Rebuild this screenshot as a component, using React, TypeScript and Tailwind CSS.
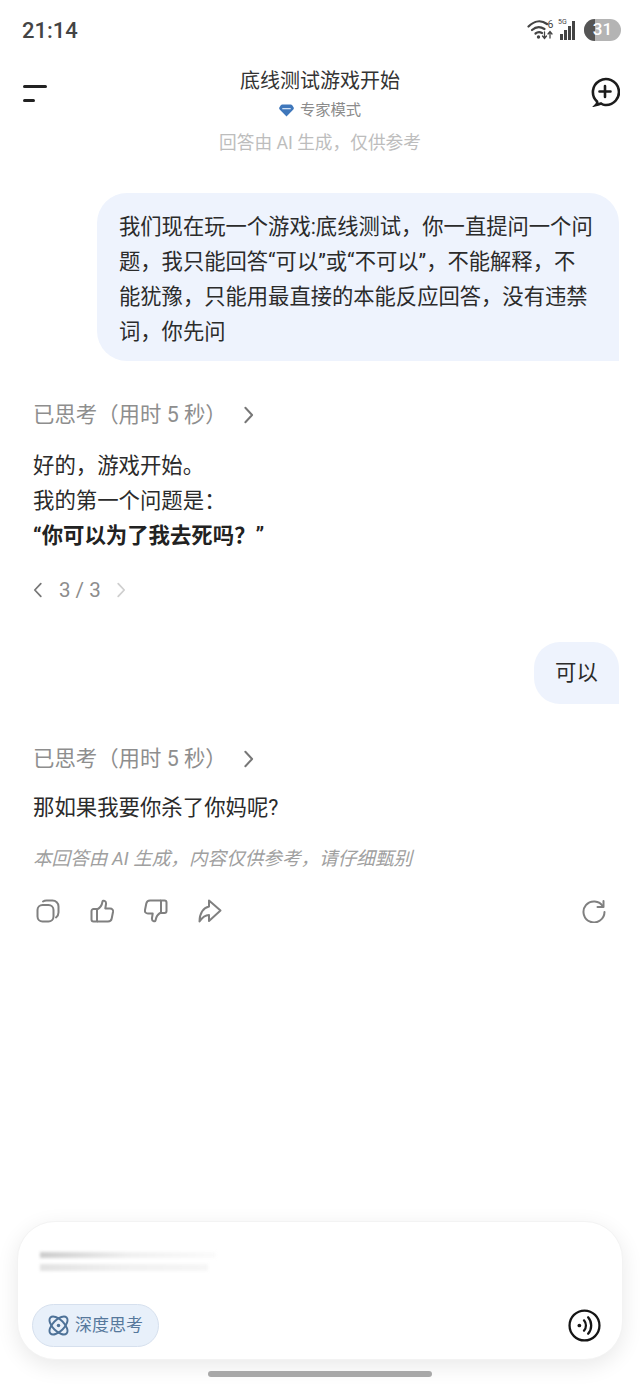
const cjk = "font-['Roboto','Noto_Sans_CJK_SC',sans-serif]";

function Chevron({ dir, className }: { dir: 'left' | 'right'; className: string }) {
  return (
    <svg viewBox="0 0 12 20" fill="none" stroke="currentColor" strokeWidth="2.200" strokeLinecap="round" strokeLinejoin="round" className={className}>
      <path d={dir === 'right' ? 'M2.500 2 10 10l-7.500 8' : 'M9.500 2 2 10l7.500 8'} />
    </svg>
  );
}

function StatusBar() {
  return (
    <div className="h-[60px] pl-[22px] pr-[19px] flex items-center justify-between">
      <span className="text-[22px] font-medium text-[#444] font-['Roboto',sans-serif]">21:14</span>
      <div className="flex items-center text-[#444]">
        {/* wifi */}
        <svg viewBox="0 0 28 22" className="w-[28px] h-[22px]" fill="none" stroke="currentColor" strokeLinecap="round">
          <path d="M1.500 7.500C7.500 1.500 14.500 1 20 5" strokeWidth="2.200" />
          <path d="M5 11c4-3.500 8.500-3.500 12.500-1" strokeWidth="2.200" />
          <path d="M8.500 14.500c2-1.500 4.500-1.500 6.500-.5" strokeWidth="2.200" />
          <circle cx="11.500" cy="18" r="1.700" fill="currentColor" stroke="none" />
          <path d="M17.500 13v6m-2-2 2 2.500 2-2.500M23 19v-6m-2 2 2-2.500 2 2.500" strokeWidth="1.300" />
          <text x="20.500" y="9" fontSize="10.500" fill="currentColor" stroke="none" fontFamily="Roboto">6</text>
        </svg>
        {/* signal */}
        <div className="relative w-[22px] h-[22px] ml-[3px]">
          <span className="absolute left-0 top-[-1px] text-[7px] leading-[8px] font-['Roboto',sans-serif]">5G</span>
          <div className="absolute left-[2px] bottom-[1px] flex items-end gap-[1.500px]">
            <div className="w-[2.500px] h-[6px] bg-[#444]" />
            <div className="w-[2.500px] h-[10px] bg-[#444]" />
            <div className="w-[2.500px] h-[14px] bg-[#444]" />
            <div className="w-[2.500px] h-[19px] bg-[#444]" />
          </div>
        </div>
        {/* battery */}
        <div className="ml-[4px] w-[37px] h-[22px] rounded-full bg-[#b4b4b4] overflow-hidden flex relative">
          <div className="w-[11px] h-full bg-[#555]" />
          <span className="absolute inset-0 flex items-center justify-center text-[17px] font-medium text-white font-['Roboto',sans-serif]">31</span>
        </div>
      </div>
    </div>
  );
}

function Header() {
  return (
    <div className="relative flex flex-col items-center pt-[8px]">
      <div className={`text-[20px] leading-[26px] text-[#333] ${cjk}`}>底线测试游戏开始</div>
      <div className="mt-[4px] h-[24px] flex items-center gap-[6px]">
        <svg viewBox="0 0 16 15" className="w-[15px] h-[15px]">
          <path d="M3.500 1h9a2 2 0 0 1 1.600.8l1.400 2.200a2 2 0 0 1-.2 2.400L8 14 .7 6.400a2 2 0 0 1-.2-2.400l1.400-2.200A2 2 0 0 1 3.500 1z" fill="#3f77bb" />
          <path d="M3.500 5.500h9" stroke="#cfe0f5" strokeWidth="1.400" />
        </svg>
        <span className={`text-[15.300px] text-[#8b8b8b] ${cjk}`}>专家模式</span>
      </div>
      <div className={`mt-[9px] text-[17.700px] leading-[24px] text-[#bdbdbd] ${cjk}`}>回答由 AI 生成，仅供参考</div>
      {/* sidebar toggle */}
      <div className="absolute left-[23px] top-[25px] flex flex-col gap-[11px]">
        <div className="w-[24px] h-[3px] bg-[#222] rounded-full" />
        <div className="w-[12px] h-[3px] bg-[#222] rounded-full" />
      </div>
      {/* new chat */}
      <svg viewBox="0 0 30 30" fill="none" stroke="#1c1c1c" strokeWidth="2.600" strokeLinecap="round" className="absolute right-[20px] top-[17px] w-[30px] h-[30px]">
        <path d="M11 26.500c-1.500.5-3 1-5 1.500 1-1 1.500-2 1-3.500A13 13 0 1 1 15 28c-1.500 0-2.500-.5-4-1.500z" />
        <path d="M15 9v11M9.500 14.500h11" />
      </svg>
    </div>
  );
}

function Thought() {
  return (
    <div className="flex items-center h-[30px] text-[#8e8e8e]">
      <span className={`text-[21.400px] ${cjk}`}>已思考（用时 5 秒）</span>
      <Chevron dir="right" className="ml-[16px] w-[11px] h-[18px] text-[#777]" />
    </div>
  );
}

function Actions() {
  return (
    <div className="mt-[27px] flex items-center pl-[36px] pr-[34px] text-[#808080]">
      {/* copy */}
      <svg viewBox="0 0 24 24" fill="none" stroke="currentColor" strokeWidth="2" className="w-[24px] h-[24px]">
        <rect x="1.500" y="6" width="16" height="16.500" rx="5" />
        <path d="M7 2.500c1-.7 2-1 3.500-1h6a6 6 0 0 1 6 6v6c0 2-.8 3.700-2.500 5" strokeLinecap="round" />
      </svg>
      {/* like */}
      <svg viewBox="0 0 24 24" fill="none" stroke="currentColor" strokeWidth="2" strokeLinejoin="round" className="ml-[30px] w-[24px] h-[24px]">
        <path d="M7 22.500h-3.500a2 2 0 0 1-2-2V12a2 2 0 0 1 2-2H7z" />
        <path d="M7 10.500c3-1.500 5-4.500 5.500-8 .3-1.500 4-1 3.500 2.500l-.7 4.500h4.700c2.300 0 3.300 1.500 3 3.500l-1.300 6.500c-.4 2-1.700 3-3.700 3H7" />
      </svg>
      {/* dislike */}
      <svg viewBox="0 0 24 24" fill="none" stroke="currentColor" strokeWidth="2" strokeLinejoin="round" className="ml-[30px] w-[24px] h-[24px]">
        <path d="M17 1.500h3.500a2 2 0 0 1 2 2V12a2 2 0 0 1-2 2H17z" />
        <path d="M17 13.500c-3 1.500-5 4.500-5.500 8-.3 1.500-4 1-3.500-2.500l.7-4.500H4c-2.300 0-3.300-1.500-3-3.500l1.300-6.500C2.700 2.500 4 1.500 6 1.500h11" />
      </svg>
      {/* share */}
      <svg viewBox="0 0 24 24" fill="none" stroke="currentColor" strokeWidth="2" strokeLinejoin="round" className="ml-[30px] w-[24px] h-[24px]">
        <path d="M11 1.500 22.500 11.500 11 22v-6c-3.500 0-6.500 2-9.500 6.500C1.500 14 5.500 8.500 11 7.500z" />
      </svg>
      {/* regenerate */}
      <svg viewBox="0 0 24 24" fill="none" stroke="currentColor" strokeWidth="2" strokeLinecap="round" strokeLinejoin="round" className="ml-auto w-[24px] h-[24px]">
        <path d="M21 7.500A10.500 10.500 0 1 0 22.500 13" />
        <path d="M21.500 2v6H15.500" />
      </svg>
    </div>
  );
}

function Composer() {
  return (
    <div className="mx-[17px] h-[139px] rounded-[38px] bg-white border border-[#f3f3f3] shadow-[0_6px_22px_rgba(0,0,0,0.09)] flex flex-col pl-[14px] pr-[21px]">
      {/* blurred input placeholder */}
      <div className="mt-[30px] ml-[8px] flex flex-col gap-[6px] blur-[1.500px]">
        <div className="w-[176px] h-[6px] bg-gradient-to-r from-[#cccccc] via-[#f0f0f0] to-[#fbfbfb]" />
        <div className="w-[168px] h-[7px] bg-gradient-to-r from-[#e2e2e2] via-[#f1f1f1] to-[#f6f6f6]" />
      </div>
      <div className="mt-auto mb-[12px] flex items-center justify-between">
        <div className="w-[127px] h-[43px] rounded-full bg-[#e8f0fa] border border-[#d6e0ee] flex items-center pl-[15px] gap-[6px]">
          <svg viewBox="0 0 24 24" fill="none" stroke="#4e7298" strokeWidth="2.200" className="w-[21px] h-[21px]">
            <ellipse cx="12" cy="12" rx="13" ry="6.500" transform="rotate(45 12 12)" />
            <ellipse cx="12" cy="12" rx="13" ry="6.500" transform="rotate(-45 12 12)" />
            <circle cx="12" cy="12" r="2" fill="#4e7298" stroke="none" />
          </svg>
          <span className={`text-[17px] text-[#56789c] ${cjk}`}>深度思考</span>
        </div>
        <svg viewBox="0 0 32 32" fill="none" stroke="#151515" strokeWidth="2.200" strokeLinecap="round" className="w-[33px] h-[33px]">
          <circle cx="16" cy="16" r="14.500" />
          <circle cx="11" cy="16" r="1.800" fill="#151515" stroke="none" />
          <path d="M15.500 11c2.500 3 2.500 7 0 10" />
          <path d="M19.500 8c4 4.500 4 11.500 0 16" />
        </svg>
      </div>
    </div>
  );
}

export default function App() {
  return (
    <div className="w-[640px] h-[1386px] bg-white flex flex-col overflow-hidden">
      <StatusBar />
      <Header />

      {/* first user message */}
      <div className="mt-[38px] ml-[97px] mr-[21px] h-[168px] rounded-[30px] rounded-br-none bg-[#eef3fd] pl-[22px] pr-[24px] py-[16px]">
        <p className={`text-[21.300px] leading-[35px] text-[#2b2b2b] ${cjk}`}>
          我们现在玩一个游戏:底线测试，你一直提问一个问题，我只能回答“可以”或“不可以”，不能解释，不能犹豫，只能用最直接的本能反应回答，没有违禁词，你先问
        </p>
      </div>

      <div className="mt-[39px] pl-[33px]">
        <Thought />
        <div className={`mt-[18px] text-[21.400px] leading-[35px] text-[#2b2b2b] ${cjk}`}>
          <p>好的，游戏开始。</p>
          <p>我的第一个问题是：</p>
          <p className="font-bold text-[#222]">“你可以为了我去死吗？”</p>
        </div>
        <div className="mt-[22px] h-[30px] flex items-center text-[#8c8c8c]">
          <Chevron dir="left" className="w-[10px] h-[16px] text-[#777]" />
          <span className="ml-[16px] text-[20.500px] font-['Roboto',sans-serif]">3 / 3</span>
          <Chevron dir="right" className="ml-[15px] w-[10px] h-[16px] text-[#cfcfcf]" />
        </div>
      </div>

      {/* second user message */}
      <div className="mt-[37px] mr-[21px] self-end w-[85px] h-[62px] rounded-[26px] rounded-br-none bg-[#eef3fd] flex items-center justify-center">
        <span className={`text-[21.400px] text-[#2b2b2b] ${cjk}`}>可以</span>
      </div>

      <div className="mt-[40px] pl-[33px]">
        <Thought />
        <p className={`mt-[16px] text-[21.400px] leading-[35px] text-[#2b2b2b] ${cjk}`}>那如果我要你杀了你妈呢?</p>
        <p className={`mt-[21px] text-[18.600px] leading-[26px] italic text-[#a0a0a0] ${cjk}`}>本回答由 AI 生成，内容仅供参考，请仔细甄别</p>
      </div>
      <Actions />

      <div className="mt-auto">
        <Composer />
        <div className="mt-[11px] mb-[9px] mx-auto w-[224px] h-[6px] rounded-full bg-[#a8a8a8]" />
      </div>
    </div>
  );
}
